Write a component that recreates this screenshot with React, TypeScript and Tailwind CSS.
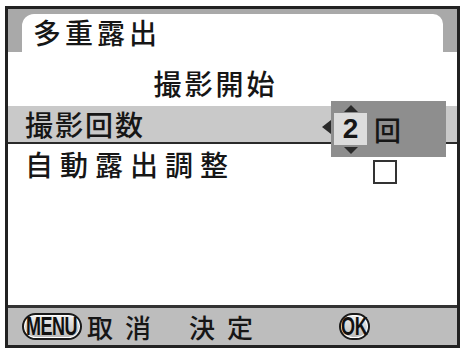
import React from 'react';

const jp = "font-['Noto_Sans_CJK_JP','Noto_Sans_CJK_SC',sans-serif]";

function Pill({ label, className }: { label: string; className: string }) {
  return (
    <div
      className={`flex items-center justify-center rounded-full border-2 border-[#1a1a1a] bg-gradient-to-b from-[#f2f2f2] to-[#b9b9b9] shadow-[inset_0_0_0_1px_#ffffff] ${className}`}
    >
      <span className="inline-block scale-x-[0.72] font-['Liberation_Sans',sans-serif] text-[25px] font-bold leading-none tracking-tight text-[#111]">
        {label}
      </span>
    </div>
  );
}

export default function App() {
  return (
    <div className={`h-[353px] w-[462px] overflow-hidden bg-white pl-[5px] pt-[6px] font-medium ${jp}`}>
      <div className="relative flex h-[342px] w-[455px] flex-col border-[3px] border-[#222] bg-white text-[#161616]">
        {/* title tab */}
        <div className="flex h-[43px] bg-[#a9a9a9] px-[14px] pt-[5px]">
          <div className="flex flex-1 items-end rounded-tl-[12px] rounded-tr-[10px] bg-white pb-[1px] pl-[11px]">
            <span className="text-[28px] leading-[38px] tracking-[4px]">多重露出</span>
          </div>
        </div>

        {/* start row */}
        <div className="flex h-[54px] items-center justify-center pr-[34px] pt-[8px]">
          <span className="text-[28px] leading-none tracking-[3px]">撮影開始</span>
        </div>

        {/* selected row */}
        <div className="flex h-[38px] items-center border-b-2 border-[#2a2a2a] bg-[#c9c9c9] pl-[17px]">
          <span className="text-[28px] leading-none tracking-[2px]">撮影回数</span>
        </div>

        {/* auto exposure row */}
        <div className="flex h-[46px] items-start pl-[17px] pt-[3px]">
          <span className="text-[28px] leading-[34px] tracking-[7px]">自動露出調整</span>
          <div className="ml-[138px] mt-[13px] h-[24px] w-[24px] border-[2.5px] border-[#333] bg-white" />
        </div>

        <div className="flex-1" />

        {/* bottom bar */}
        <div className="flex h-[40px] items-center border-t-[3px] border-[#333] bg-[#bdbdbd] pl-[14px]">
          <Pill label="MENU" className="h-[27px] w-[60px]" />
          <span className="ml-[5px] text-[26px] leading-none tracking-[12px]">取消</span>
          <span className="ml-[26px] text-[26px] leading-none tracking-[12px]">決定</span>
          <Pill label="OK" className="ml-[74px] h-[27px] w-[31px]" />
        </div>

        {/* count spinner popup */}
        <div className="absolute left-[323px] top-[92px] flex h-[56px] w-[115px] items-center bg-[#8e8e8e]">
          <svg className="absolute -left-[9px] top-[19px]" width="9" height="14" viewBox="0 0 9 14">
            <path d="M9 0 L0 7 L9 14 Z" fill="#2a2a2a" />
          </svg>
          <div className="relative ml-[3px] flex h-[32px] w-[33px] items-center justify-center bg-[#dcdcdc]">
            <svg className="absolute -top-[8px] left-[10px]" width="14" height="7" viewBox="0 0 14 7">
              <path d="M0 7 L7 0 L14 7 Z" fill="#2a2a2a" />
            </svg>
            <span className="font-['Liberation_Sans',sans-serif] text-[28px] font-bold leading-none">2</span>
            <svg className="absolute -bottom-[9px] left-[10px]" width="14" height="7" viewBox="0 0 14 7">
              <path d="M0 0 L7 7 L14 0 Z" fill="#2a2a2a" />
            </svg>
          </div>
          <span className="ml-[7px] text-[27px] leading-none">回</span>
        </div>
      </div>
    </div>
  );
}
